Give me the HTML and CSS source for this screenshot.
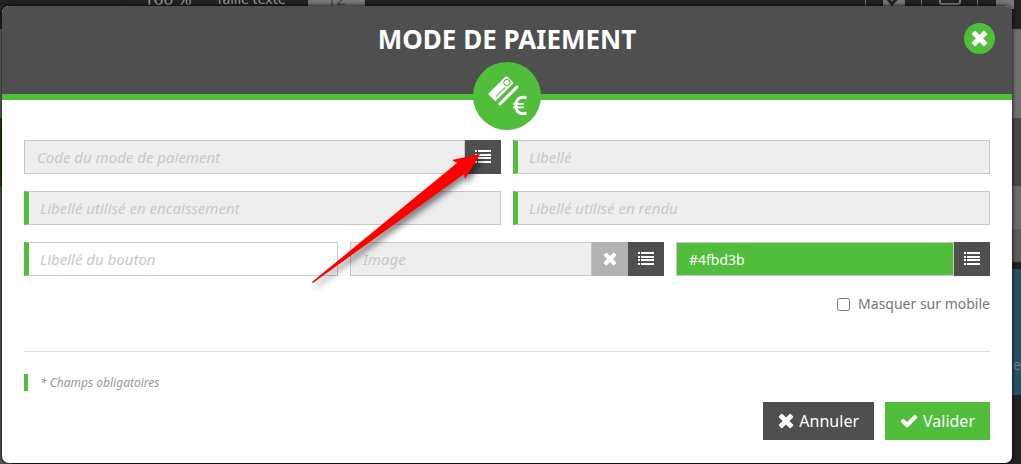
FILE: index.html
```html
<!DOCTYPE html>
<html lang="fr">

<head>
    <meta charset="UTF-8">
    <meta name="viewport" content="width=device-width, initial-scale=1.0">
    <title>Mode de paiement</title>
    <link rel="stylesheet" href="styles.css">
</head>

<body>
    <!-- shared icons -->
    <svg class="sprite" aria-hidden="true">
        <symbol id="icon-list" viewBox="0 0 16 14">
            <path d="M0 0h2v2H0zM3 0h13v2H3zM0 4h2v2H0zM3 4h13v2H3zM0 7h2v2H0zM3 7h13v2H3zM0 11h2v2H0zM3 11h13v2H3z" />
        </symbol>
        <symbol id="icon-times" viewBox="0 0 16 16">
            <path d="M4.400 1 8 4.600 11.600 1q.6-.5 1.200 0L15 3.200q.5.6 0 1.200L11.400 8l3.600 3.600q.5.6 0 1.200L12.800 15q-.6.5-1.200 0L8 11.400 4.400 15q-.6.5-1.200 0L1 12.800q-.5-.6 0-1.200L4.600 8 1 4.400q-.5-.6 0-1.200L3.200 1q.6-.5 1.200 0z" />
        </symbol>
        <symbol id="icon-check" viewBox="0 0 18 16">
            <path d="M6.2 14.2.9 8.9q-.6-.6 0-1.2l1.7-1.8q.6-.5 1.2 0l3.300 3.100 7.200-7.100q.6-.5 1.2 0l1.7 1.8q.6.6 0 1.2L7.9 14.2q-.8.8-1.7 0z" />
        </symbol>
    </svg>

    <div class="backdrop" aria-hidden="true">
        <div class="topbar">
            <span class="dot"></span>
            <span class="zoom">100 %</span>
            <span class="size-label">Taille texte</span>
            <span class="size-value">12</span>
            <div class="tools">
                <span class="tool"><svg width="22" height="22" viewBox="0 0 22 22"><path fill="#777" d="M0 0h22v22H0z" /><path d="M5 12l4 5 8-9" fill="none" stroke="#222" stroke-width="3" /></svg></span>
                <span class="tool"><svg width="22" height="22" viewBox="0 0 22 22"><rect x="1" y="1" width="20" height="16" rx="2" fill="none" stroke="#777" stroke-width="2" /></svg></span>
                <span class="tool"><svg width="18" height="24" viewBox="0 0 18 24"><path fill="#777" d="M0 0h18v24H0z" /></svg></span>
            </div>
        </div>
        <div class="columns">
            <div class="column">
                <div class="band band-left"></div>
                <div class="band band-green"></div>
                <div class="band band-fill"></div>
            </div>
            <div class="column">
                <div class="band band-light"></div>
                <div class="band band-mid"></div>
                <div class="band band-grey"></div>
                <div class="band band-dim"></div>
                <div class="band band-line"></div>
                <div class="band band-blue">e</div>
            </div>
        </div>
    </div>

    <div class="modal" role="dialog" aria-labelledby="modalTitle">
        <header class="modal-header">
            <h1 id="modalTitle">MODE DE PAIEMENT</h1>
            <button type="button" class="close" aria-label="Fermer"><svg width="17" height="17"><use href="#icon-times" /></svg></button>
            <div class="badge">
                <svg width="40" height="42" viewBox="0 0 40 42">
                    <g transform="translate(1 19) rotate(-45)" fill="#fff">
                        <rect width="26" height="10.500" rx="1.500" />
                        <rect x="0" y="14" width="27" height="3" rx="1.500" />
                        <g fill="none" stroke="#50bd3b">
                            <circle cx="21.500" cy="5.200" r="3" stroke-width="1.200" />
                            <path d="M4 7.500h13" stroke-width="1.200" stroke-dasharray="2 .5" />
                        </g>
                    </g>
                    <g fill="none" stroke="#fff">
                        <path d="M39.500 22.700q-10.500-2-10.500 7.800t10.500 7.800" stroke-width="3" />
                        <path d="M26 28.800h11M26 32.300h11" stroke-width="1.700" />
                    </g>
                </svg>
            </div>
        </header>

        <form class="modal-body">
            <div class="row">
                <div class="field disabled">
                    <input type="text" placeholder="Code du mode de paiement" aria-label="Code du mode de paiement" readonly>
                    <button type="button" aria-label="Choisir un code"><svg width="16" height="14"><use href="#icon-list" /></svg></button>
                </div>
                <div class="field disabled required">
                    <input type="text" placeholder="Libellé" aria-label="Libellé" readonly>
                </div>
            </div>
            <div class="row">
                <div class="field disabled required">
                    <input type="text" placeholder="Libellé utilisé en encaissement" aria-label="Libellé utilisé en encaissement" readonly>
                </div>
                <div class="field disabled required">
                    <input type="text" placeholder="Libellé utilisé en rendu" aria-label="Libellé utilisé en rendu" readonly>
                </div>
            </div>
            <div class="row">
                <div class="field required">
                    <input type="text" placeholder="Libellé du bouton" aria-label="Libellé du bouton">
                </div>
                <div class="field disabled">
                    <input type="text" placeholder="Image" aria-label="Image" readonly>
                    <button type="button" class="clear" aria-label="Effacer"><svg width="14" height="14"><use href="#icon-times" /></svg></button>
                    <button type="button" aria-label="Choisir une image"><svg width="16" height="14"><use href="#icon-list" /></svg></button>
                </div>
                <div class="field color">
                    <input type="text" value="#4fbd3b" aria-label="Couleur">
                    <button type="button" aria-label="Choisir une couleur"><svg width="16" height="14"><use href="#icon-list" /></svg></button>
                </div>
            </div>

            <div class="option">
                <input type="checkbox" id="hideMobile">
                <label for="hideMobile">Masquer sur mobile</label>
            </div>

            <hr>

            <p class="note">* Champs obligatoires</p>

            <div class="actions">
                <button type="button" class="cancel"><svg width="16" height="16"><use href="#icon-times" /></svg>Annuler</button>
                <button type="submit" class="submit"><svg width="18" height="16"><use href="#icon-check" /></svg>Valider</button>
            </div>
        </form>

        <!-- pointer to the code picker -->
        <svg class="arrow" width="180" height="140" viewBox="0 0 180 140" aria-hidden="true">
            <path fill="#f00" d="M2 132 147 13l-5-3 28-6-15 25-1-5L3 133z" />
        </svg>
    </div>
</body>

</html>
```
FILE: styles.css
```css
* {
    box-sizing: border-box;
}

body {
    margin: 0;
    min-height: 100vh;
    padding: 6px 9px 1px 2px;
    font-family: "Noto Sans", sans-serif;
    font-size: 14px;
    background: #222;
}

.sprite {
    position: absolute;
    width: 0;
    height: 0;
}

svg {
    display: block;
    fill: currentColor;
}

/* dimmed page behind the dialog */
.backdrop {
    position: absolute;
    inset: 0;
    overflow: hidden;
    color: #777;
    background: #222;
}

.topbar {
    display: flex;
    align-items: flex-end;
    height: 29px;
    padding: 0 7px 20px 114px;
    line-height: 20px;
}

.dot {
    width: 16px;
    height: 16px;
    margin-bottom: -12px;
    border-radius: 50%;
    background: #1a5010;
}

.zoom {
    margin-left: 14px;
    font-size: 17px;
    color: #999;
}

.size-label {
    margin-left: 24px;
    color: #999;
}

.size-value {
    width: 57px;
    margin-left: 22px;
    text-align: center;
    font-size: 16px;
    color: #444;
    background: #777;
}

.tools {
    display: flex;
    align-items: flex-end;
    margin-left: auto;
}

.tool {
    display: flex;
    align-items: flex-end;
    height: 24px;
    padding: 0 16px 0 17px;
    border-left: 1px solid #777;
}

.tool:last-child {
    padding: 0 0 0 18px;
}

.columns {
    display: flex;
    justify-content: space-between;
    height: 435px;
}

.column {
    display: flex;
    flex-direction: column;
    width: 12px;
}

.band-left {
    height: 89px;
    background: #666;
}

.band-green {
    height: 68px;
    background: #184510;
}

.band-fill {
    flex: 1;
    background: #555;
}

.band-light {
    height: 89px;
    background: #6f6f6f;
}

.band-mid {
    height: 68px;
    background: #484848;
}

.band-grey {
    height: 43px;
    background: #6c6c6c;
}

.band-dim {
    height: 33px;
    background: #5c5c5c;
}

.band-line {
    height: 7px;
}

.band-blue {
    height: 126px;
    padding-top: 86px;
    text-align: right;
    background: #245067;
}

/* dialog */
.modal {
    position: relative;
    border-radius: 7px;
    background: #fff;
    box-shadow: 0 0 4px #000;
}

.modal-header {
    position: relative;
    height: 94px;
    padding-top: 17px;
    text-align: center;
    color: #fff;
    background: #4f4f4f;
    border-bottom: 6px solid #50bd3b;
    border-radius: 7px 7px 0 0;
}

h1 {
    margin: 0;
    font-size: 26px;
    line-height: 32px;
}

button {
    display: flex;
    align-items: center;
    justify-content: center;
    padding: 0;
    border: 0;
    color: #fff;
    font: inherit;
    background: #4f4f4f;
    cursor: pointer;
}

.close {
    position: absolute;
    top: 17px;
    right: 17px;
    width: 31px;
    height: 31px;
    border-radius: 50%;
    background: #50bd3b;
}

.badge {
    position: absolute;
    top: 56px;
    left: 50%;
    display: flex;
    align-items: center;
    justify-content: center;
    width: 68px;
    height: 68px;
    margin-left: -34px;
    border-radius: 50%;
    background: #50bd3b;
}

.modal-body {
    padding: 40px 22px 23px;
}

.row {
    display: flex;
    gap: 12px;
    margin-bottom: 17px;
}

.field {
    display: flex;
    flex: 1;
    min-width: 0;
    height: 34px;
}

.field input {
    flex: 1;
    min-width: 0;
    padding: 0 12px;
    border: 1px solid #c8c8c8;
    border-radius: 0;
    outline: 0;
    font: inherit;
    font-size: 15px;
    background: #fff;
}

.field input::placeholder {
    color: #c8c8c8;
    font-style: italic;
    opacity: 1;
}

.field.disabled input {
    background: #eee;
}

.field.required input {
    padding-left: 11px;
    border-left: 5px solid #50bd3b;
}

.field.color input {
    font-size: 14px;
    color: #fff;
    background: #50bd3b;
}

.field button {
    width: 36px;
}

.field .clear {
    background: #b3b3b3;
}

.option {
    display: flex;
    align-items: center;
    justify-content: flex-end;
    gap: 8px;
    line-height: 22px;
    color: #777;
}

.option input {
    width: 13px;
    height: 13px;
    margin: 0;
}

hr {
    margin: 36px 0 22px;
    border: 0;
    border-top: 1px solid #ddd;
}

.note {
    margin: 0 0 11px;
    padding-left: 12px;
    border-left: 4px solid #50bd3b;
    font-size: 12px;
    font-style: italic;
    line-height: 17px;
    color: #999;
}

.actions {
    display: flex;
    justify-content: flex-end;
    gap: 11px;
}

.actions button {
    gap: 5px;
    height: 38px;
    padding: 0 15px;
    font-size: 16px;
}

.actions .submit {
    background: #50bd3b;
}

.arrow {
    position: absolute;
    top: 144px;
    left: 308px;
    filter: drop-shadow(3px 4px 3px rgba(0, 0, 0, 0.5));
    pointer-events: none;
}
```
